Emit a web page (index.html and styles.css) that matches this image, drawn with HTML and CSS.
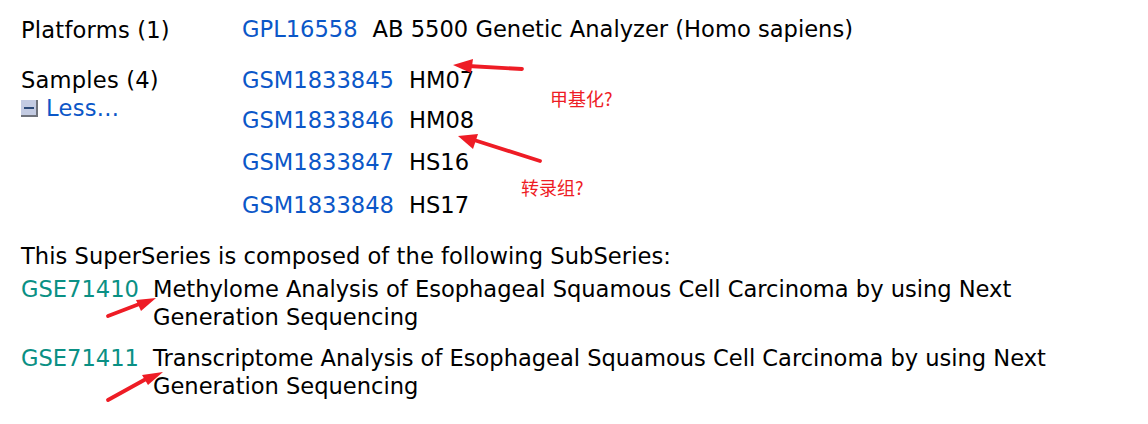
FILE: index.html
```
<!DOCTYPE html>
<html lang="en">
<head>
<meta charset="utf-8">
<title>SuperSeries</title>
<link rel="stylesheet" href="styles.css">
</head>
<body>
<main class="page">
  <section class="meta">
    <div class="label">Platforms (1)</div>
    <div class="row platform"><a class="blue" href="#">GPL16558</a><span>AB 5500 Genetic Analyzer (Homo sapiens)</span></div>
    <div class="label samples-label">
      <div>Samples (4)</div>
      <div class="less">
        <svg class="toggle" width="17" height="17" viewBox="0 0 17 17"><rect width="17" height="17" fill="#6f737c"/><rect width="15" height="15" fill="#c3cbe2"/><rect x="3" y="7" width="10" height="2" fill="#2c4a78"/></svg>
        <a class="blue" href="#">Less...</a>
      </div>
    </div>
    <div class="samples">
      <div class="row sample s1"><a class="blue" href="#">GSM1833845</a><span>HM07</span></div>
      <div class="row sample s2"><a class="blue" href="#">GSM1833846</a><span>HM08</span></div>
      <div class="row sample s3"><a class="blue" href="#">GSM1833847</a><span>HS16</span></div>
      <div class="row sample s4"><a class="blue" href="#">GSM1833848</a><span>HS17</span></div>
    </div>
  </section>
  <p class="intro">This SuperSeries is composed of the following SubSeries:</p>
  <div class="sub first"><a class="teal" href="#">GSE71410</a><div>Methylome Analysis of Esophageal Squamous Cell Carcinoma by using Next Generation Sequencing</div></div>
  <div class="sub second"><a class="teal" href="#">GSE71411</a><div>Transcriptome Analysis of Esophageal Squamous Cell Carcinoma by using Next Generation Sequencing</div></div>
</main>
<svg class="marks" width="1148" height="424" viewBox="0 0 1148 424" aria-hidden="true">
  <g stroke="#ee1c25" stroke-width="3.8" stroke-linecap="round" fill="none">
    <line x1="522" y1="69" x2="468" y2="66"/>
    <line x1="540" y1="161" x2="474" y2="140"/>
    <line x1="108" y1="316" x2="142" y2="303"/>
    <line x1="108" y1="400" x2="146" y2="379"/>
  </g>
  <g fill="#ee1c25">
    <polygon points="453,65 473,59 471,73"/>
    <polygon points="458,136 478,134 473,149"/>
    <polygon points="156,298 141,311 136,300"/>
    <polygon points="163,372 148,385 142,375"/>
  </g>
</svg>
<div class="note n1">甲基化?</div>
<div class="note n2">转录组?</div>
</body>
</html>
```
FILE: styles.css
```
html, body { margin: 0; padding: 0; background: #fff; }
body { width: 1148px; height: 424px; overflow: hidden; position: relative; }
.page {
  font-family: "DejaVu Sans", Verdana, sans-serif;
  font-size: 22.6px;
  color: #000;
  padding: 15px 0 0 21px;
  box-sizing: border-box;
  width: 1060px;
}
a { text-decoration: none; }
.blue { color: #0b57c8; }
.teal { color: #0a9084; }
.meta { display: grid; grid-template-columns: 221px 1fr; }
.label, .row, .intro, .sub { line-height: 28px; }
.label { padding-top: 1px; letter-spacing: 0.2px; }
.row { display: flex; }
.platform { gap: 15px; }
.samples-label { margin-top: 21px; }
.less { display: flex; align-items: center; gap: 8px; letter-spacing: 0.3px; }
.toggle { flex: none; }
.samples { margin-top: 22px; }
.sample { gap: 15px; }
.s2 { margin-top: 12px; }
.s3 { margin-top: 14px; }
.s4 { margin-top: 15px; }
.intro { margin: 23px 0 0; letter-spacing: 0.05px; }
.sub { display: grid; grid-template-columns: 132px 1fr; letter-spacing: -0.02px; }
.first { margin-top: 5px; }
.second { margin-top: 13px; }
.marks { position: absolute; left: 0; top: 0; }
.note { position: absolute; font-family: "Noto Sans CJK SC", sans-serif; font-size: 18px; line-height: 20px; color: #ee1c25; }
.n1 { left: 550px; top: 88px; }
.n2 { left: 521px; top: 177px; }
```
